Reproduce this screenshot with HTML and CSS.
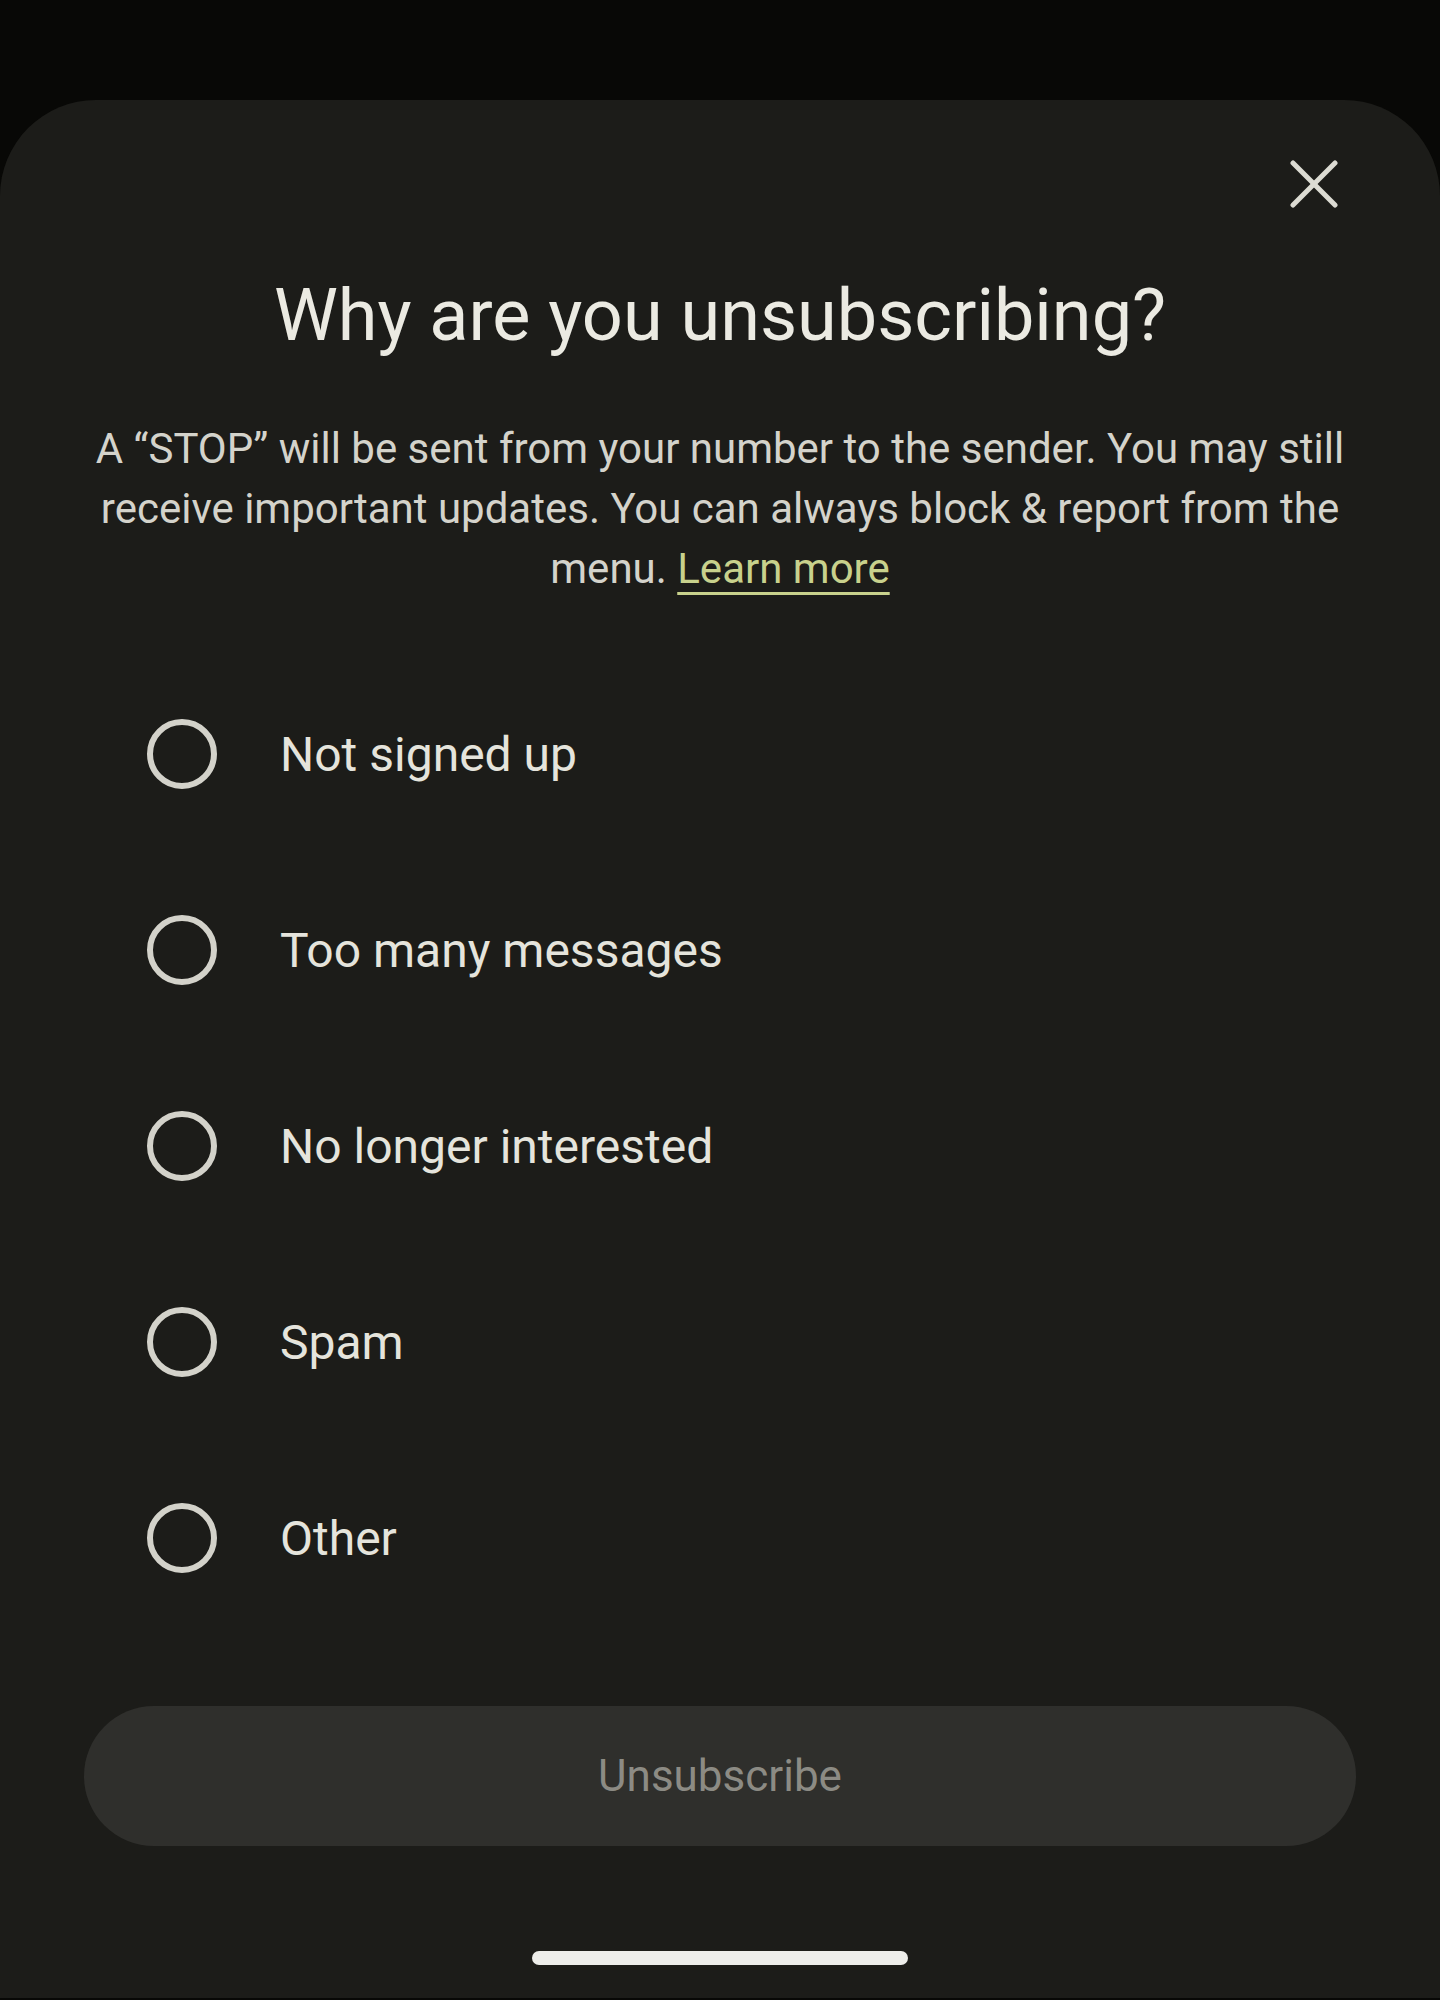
FILE: index.html
```html
<!DOCTYPE html>
<html lang="en">
<head>
    <meta charset="UTF-8">
    <meta name="viewport" content="width=device-width, initial-scale=1.0">
    <title>Unsubscribe</title>
    <link rel="stylesheet" href="styles.css">
</head>
<body>

    <div class="sheet">
        <div class="sheet-header">
            <button class="close-btn" aria-label="Close">
                <svg width="48" height="48" viewBox="0 0 48 48">
                    <line x1="3" y1="3" x2="45" y2="45" />
                    <line x1="45" y1="3" x2="3" y2="45" />
                </svg>
            </button>
        </div>

        <h2 class="title">Why are you unsubscribing?</h2>

        <p class="info">
            A “STOP” will be sent from your number to the sender. You may still
            receive important updates. You can always block &amp; report from the
            menu. <a href="#">Learn more</a>
        </p>

        <div class="options">
            <label class="option"><input type="radio" name="reason"><span>Not signed up</span></label>
            <label class="option"><input type="radio" name="reason"><span>Too many messages</span></label>
            <label class="option"><input type="radio" name="reason"><span>No longer interested</span></label>
            <label class="option"><input type="radio" name="reason"><span>Spam</span></label>
            <label class="option"><input type="radio" name="reason"><span>Other</span></label>
        </div>

        <button class="unsubscribe" disabled>Unsubscribe</button>

        <div class="home-bar"></div>
    </div>

</body>
</html>
```

FILE: styles.css
```css
body {
    margin: 0;
    background-color: #080806;
    font-family: Roboto, "Open Sans", sans-serif;
}

.sheet {
    margin-top: 100px;
    background-color: #1c1c19;
    border-radius: 96px 96px 0 0;
    padding: 42px 84px 33px;
    display: flex;
    flex-direction: column;
    min-height: 1765px;
}

.sheet-header {
    display: flex;
    justify-content: flex-end;
}

.close-btn {
    width: 84px;
    height: 84px;
    display: flex;
    align-items: center;
    justify-content: center;
    background: none;
    border: none;
    padding: 0;
    cursor: pointer;
}

.close-btn line {
    stroke: #dcdbd3;
    stroke-width: 5;
    stroke-linecap: round;
}

.title {
    margin: 49px 0 0;
    font-size: 72px;
    line-height: 82px;
    font-weight: 400;
    text-align: center;
    color: #ebeae2;
}

.info {
    margin: 62px -4px 0;
    font-size: 42px;
    line-height: 60px;
    text-align: center;
    color: #d4d3cb;
}

.info a {
    color: #c8d18c;
    text-decoration: underline;
    text-decoration-thickness: 3px;
    text-underline-offset: 9px;
}

.options {
    margin-top: 57px;
    padding-left: 63px;
    display: flex;
    flex-direction: column;
}

.option {
    height: 196px;
    display: flex;
    align-items: center;
    gap: 63px;
    font-size: 48px;
    color: #e5e4dc;
    cursor: pointer;
}

.option input {
    appearance: none;
    margin: 0;
    width: 70px;
    height: 70px;
    border: 6px solid #d3d2ca;
    border-radius: 50%;
    box-sizing: border-box;
    flex-shrink: 0;
}

.unsubscribe {
    margin-top: 70px;
    height: 140px;
    border: none;
    border-radius: 70px;
    background-color: #2f2f2c;
    color: #8c8b84;
    font-family: inherit;
    font-size: 44px;
}

.home-bar {
    margin: 105px auto 0;
    width: 376px;
    height: 14px;
    border-radius: 7px;
    background-color: #ededea;
}
```
